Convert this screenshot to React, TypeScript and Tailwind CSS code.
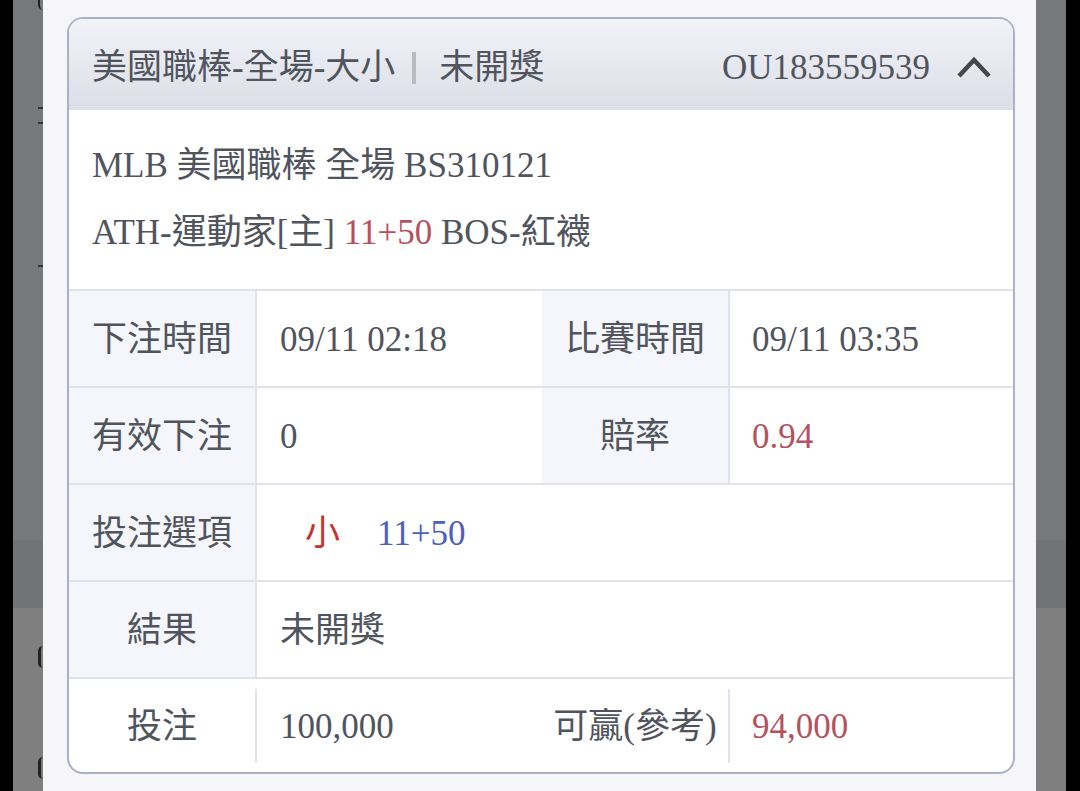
const serif = "font-['Liberation_Serif','Noto_Sans_CJK_TC',serif]"
const line = 'border-[#e1e2ec]'

const SideStrip = ({ left }: { left?: boolean }) => (
  <div className="relative flex w-[30px] flex-col">
    <div className="h-[540px] bg-[#77787c]" />
    <div className="h-[68px] bg-[#727377]" />
    <div className="flex-1 bg-[#7f7f80]" />
    {left && (
      <>
        <span className="absolute right-0 top-[-6px] h-[16px] w-[5px] rounded-l-full border-l-2 border-[#222]" />
        <span className="absolute right-0 top-[107px] h-[2px] w-[5px] bg-[#333]" />
        <span className="absolute right-0 top-[122px] h-[2px] w-[5px] bg-[#333]" />
        <span className="absolute right-0 top-[265px] h-[2px] w-[5px] bg-[#333]" />
        <span className="absolute right-0 top-[646px] h-[22px] w-[5px] rounded-l-full border-l-[3px] border-[#222]" />
        <span className="absolute right-0 top-[757px] h-[22px] w-[5px] rounded-l-full border-l-[3px] border-[#222]" />
      </>
    )}
  </div>
)

const Label = ({ children, white }: { children: React.ReactNode; white?: boolean }) => (
  <div
    className={[
      'flex w-[186px] shrink-0 items-center justify-center pt-[4px]',
      white ? 'bg-white' : 'bg-[#f5f6fb]',
    ].join(' ')}
  >
    {children}
  </div>
)

const Row = ({ children }: { children: React.ReactNode }) => (
  <div className={`flex h-[97px] border-t-2 ${line}`}>{children}</div>
)

export default function App() {
  return (
    <div className={`flex h-[791px] w-[1080px] overflow-hidden bg-black text-[35px] text-[#50545d] ${serif}`}>
      <div className="w-[13px] shrink-0" />
      <SideStrip left />

      <main className="w-[993px] shrink-0 bg-[#f6f6f8] pl-[24px] pt-[17px]">
        <div className="w-[948px] overflow-hidden rounded-[16px] border-2 border-[#aab0c8] bg-white">
          <header className="flex h-[91px] items-center justify-between bg-gradient-to-b from-[#f2f3f8] to-[#dcdee8] pl-[23px] pr-[21px] pt-[7px]">
            <div className="flex items-center">
              <span>美國職棒-全場-大小</span>
              <span className="ml-[17px] mr-[23px] h-[32px] w-[4px] bg-[#b9bbc4]" />
              <span>未開獎</span>
            </div>
            <div className="flex items-center">
              <span>OU183559539</span>
              <svg className="ml-[26px] -mt-[3px]" width="36" height="26" viewBox="0 0 36 26" fill="none">
                <polyline points="3,22 18,6 33,22" stroke="#45474d" strokeWidth="4.5" strokeLinejoin="miter" />
              </svg>
            </div>
          </header>

          <div className="pb-[23px] pl-[23px] pt-[22px] leading-[67px]">
            <p>MLB 美國職棒 全場 BS310121</p>
            <p>
              ATH-運動家[主] <span className="text-[#b4525e]">11+50</span> BOS-紅襪
            </p>
          </div>

          <Row>
            <Label>下注時間</Label>
            <div className={`flex w-[287px] items-center border-l-2 ${line} pl-[23px] pt-[4px]`}>09/11 02:18</div>
            <Label>比賽時間</Label>
            <div className={`flex flex-1 items-center border-l-2 ${line} pl-[22px] pt-[4px]`}>09/11 03:35</div>
          </Row>
          <Row>
            <Label>有效下注</Label>
            <div className={`flex w-[287px] items-center border-l-2 ${line} pl-[23px] pt-[4px]`}>0</div>
            <Label>賠率</Label>
            <div className={`flex flex-1 items-center border-l-2 ${line} pl-[22px] pt-[4px] text-[#b4525e]`}>0.94</div>
          </Row>
          <Row>
            <Label>投注選項</Label>
            <div className={`flex flex-1 items-center border-l-2 ${line} pl-[48px] pt-[4px]`}>
              <span className="text-[#c8322d]">小</span>
              <span className="ml-[37px] text-[#4b5fbf]">11+50</span>
            </div>
          </Row>
          <Row>
            <Label>結果</Label>
            <div className={`flex flex-1 items-center border-l-2 ${line} pl-[23px] pt-[4px]`}>未開獎</div>
          </Row>
          <div className={`flex h-[95px] items-center border-t-2 ${line}`}>
            <Label white>投注</Label>
            <div className="h-[74px] w-[2px] bg-[#e1e2ec]" />
            <div className="w-[285px] pl-[23px] pt-[4px]">100,000</div>
            <Label white>可贏(參考)</Label>
            <div className="h-[74px] w-[2px] bg-[#e1e2ec]" />
            <div className="flex-1 pl-[22px] pt-[4px] text-[#b4525e]">94,000</div>
          </div>
        </div>
      </main>

      <SideStrip />
      <div className="flex-1" />
    </div>
  )
}
